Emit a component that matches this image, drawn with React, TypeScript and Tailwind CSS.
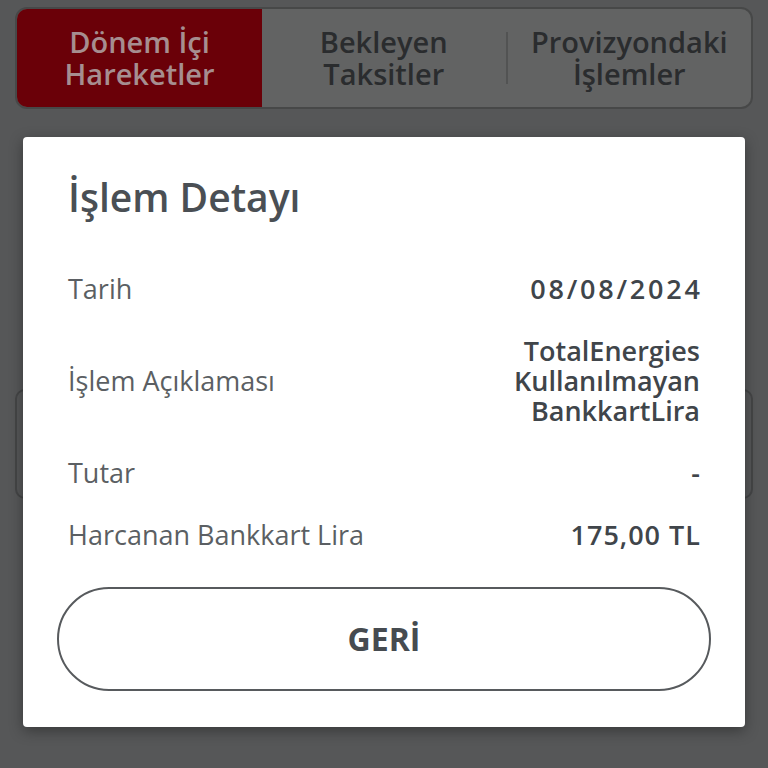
import React from 'react';

interface RowProps {
  label: string;
  value: React.ReactNode;
  valueClass?: string;
}

const Row = ({ label, value, valueClass = '' }: RowProps) => (
  <div className="flex items-center justify-between">
    <span className="text-[27px] leading-[30px] text-[#5b5f63]">{label}</span>
    <span className={`text-right text-[27px] leading-[30px] font-semibold text-[#40454a] ${valueClass}`}>{value}</span>
  </div>
);

const App = () => {
  return (
    <div
      className="relative h-[768px] w-[768px] overflow-hidden bg-[#565758]"
      style={{ fontFamily: '"Open Sans", "Liberation Sans", sans-serif' }}
    >
      {/* page behind the overlay */}
      <div className="mx-[15px] mt-[7px] flex h-[102px] overflow-hidden rounded-[12px] border-2 border-[#474848] bg-[#626363]">
        <div className="flex w-[245px] flex-col items-center justify-center bg-[#6a0008] text-[29px] leading-[32px] font-semibold text-[#a68e90]">
          <span>Dönem İçi</span>
          <span>Hareketler</span>
        </div>
        <div className="flex flex-1 flex-col items-center justify-center text-[29px] leading-[32px] font-semibold text-[#2a2c2e]">
          <span>Bekleyen</span>
          <span>Taksitler</span>
        </div>
        <div className="my-auto h-[52px] w-[2px] bg-[#525353]" />
        <div className="flex flex-1 flex-col items-center justify-center text-[29px] leading-[32px] font-semibold text-[#2a2c2e]">
          <span>Provizyondaki</span>
          <span>İşlemler</span>
        </div>
      </div>
      <div className="mx-[15px] mt-[280px] h-[110px] rounded-[10px] border-2 border-[#444546]" />

      {/* modal */}
      <div className="absolute left-[23px] top-[137px] flex h-[590px] w-[722px] flex-col rounded-[4px] bg-white px-[45px] pt-[37px] shadow-[0_4px_14px_rgba(0,0,0,0.35)]">
        <h2 className="text-[39px] leading-[46px] font-semibold text-[#4a4f54]">İşlem Detayı</h2>
        <div className="mt-[54px] flex flex-col gap-[32px]">
          <Row label="Tarih" value="08/08/2024" valueClass="tracking-[2.8px] mr-[-2.8px]" />
          <Row
            label="İşlem Açıklaması"
            value={
              <>
                TotalEnergies
                <br />
                Kullanılmayan
                <br />
                BankkartLira
              </>
            }
          />
          <Row label="Tutar" value="-" />
          <Row label="Harcanan Bankkart Lira" value="175,00 TL" valueClass="tracking-[1px] mr-[-1px]" />
        </div>
        <button className="mx-[-11px] mt-[37px] flex h-[104px] items-center justify-center rounded-full border-2 border-[#575a5d] bg-white text-[32px] font-bold text-[#464b50]">
          GERİ
        </button>
      </div>
    </div>
  );
};

export default App;
